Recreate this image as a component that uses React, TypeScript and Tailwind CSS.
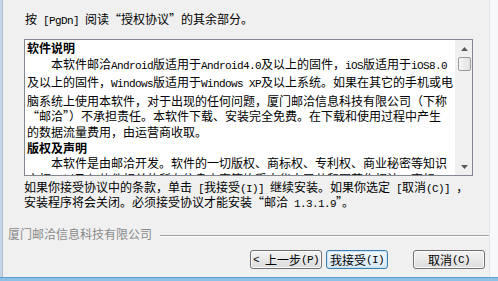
import React from "react";

const mono = "font-['Liberation_Mono'] text-[11px] tracking-[-0.6px]";

// SimSun-like mix: ASCII runs are half-width (6px), CJK runs full-width
function T({ s }: { s: string }) {
  const parts = s.split(/([\x20-\x7e]+)/).filter((p) => p !== "");
  return (
    <>
      {parts.map((p, i) =>
        /^[\x20-\x7e]+$/.test(p) ? (
          <span key={i} className={`${mono} whitespace-pre`}>
            {p}
          </span>
        ) : (
          <span key={i}>{p}</span>
        )
      )}
    </>
  );
}

const lines: { s: string; bold?: boolean; indent?: boolean }[] = [
  { s: "软件说明", bold: true },
  { s: "本软件邮洽Android版适用于Android4.0及以上的固件，iOS版适用于iOS8.0", indent: true },
  { s: "及以上的固件，Windows版适用于Windows XP及以上系统。如果在其它的手机或电" },
  { s: "脑系统上使用本软件，对于出现的任何问题，厦门邮洽信息科技有限公司（下称" },
  { s: "“邮洽”）不承担责任。本软件下载、安装完全免费。在下载和使用过程中产生" },
  { s: "的数据流量费用，由运营商收取。" },
  { s: "版权及声明", bold: true },
  { s: "本软件是由邮洽开发。软件的一切版权、商标权、专利权、商业秘密等知识", indent: true },
  { s: "产权，以及与软件相关的所有信息内容等均受中华人民共和国著作权法、商标" },
];

function Arrow({ down }: { down?: boolean }) {
  return (
    <svg width="7" height="4" viewBox="0 0 7 4">
      {down ? (
        <polygon points="0,0 7,0 3.5,4" fill="#5a5a5a" />
      ) : (
        <polygon points="0,4 7,4 3.5,0" fill="#5a5a5a" />
      )}
    </svg>
  );
}

function Btn({ label, w, def }: { label: string; w: string; def?: boolean }) {
  return (
    <div
      className={`${w} h-[19px] shrink-0 rounded-[3px] border flex items-center justify-center text-[12px] leading-[12px] ${
        def
          ? "border-[#3c7fb1] bg-gradient-to-b from-[#f4f9fd] to-[#d6e8f5] shadow-[inset_0_0_0_1px_#c9e4f7]"
          : "border-[#707070] bg-gradient-to-b from-[#f4f4f4] to-[#dcdcdc] shadow-[inset_0_0_0_1px_#fbfbfb]"
      }`}
    >
      <T s={label} />
    </div>
  );
}

export default function App() {
  return (
    <div className="w-[498px] h-[281px] overflow-hidden bg-[#f0f0f0] grid grid-rows-[277px_4px] font-['Noto_Sans_CJK_SC',sans-serif] text-black">
      <div className="grid grid-cols-[3px_1fr_9px] overflow-hidden">
        <div className="bg-[#c6d6e6] border-r border-[#aebfd0]" />
        <div className="flex flex-col">
          <div className="shrink-0 h-[12px] mt-[13px] pl-[22px] text-[12px] leading-[12px] whitespace-nowrap">
            <T s="按 [PgDn] 阅读“授权协议”的其余部分。" />
          </div>

          <div className="shrink-0 mt-[14px] ml-[21px] w-[449px] h-[137px] border border-[#828790] bg-white flex overflow-hidden">
            <div className="flex-1 overflow-hidden pl-[2px] text-[12px] leading-[15.6px]">
              {lines.map((l, i) => (
                <div
                  key={i}
                  className={`whitespace-nowrap ${l.bold ? "font-bold" : ""} ${l.indent ? "pl-[24px]" : ""}`}
                >
                  <T s={l.s} />
                </div>
              ))}
            </div>
            <div className="w-[17px] bg-[#f0f0f0] flex flex-col">
              <div className="h-[17px] flex items-center justify-center pl-[1px]">
                <Arrow />
              </div>
              <div className="h-[14px] ml-[3px] mr-[1px] rounded-[2px] border border-[#9b9b9b] bg-gradient-to-r from-[#f5f5f5] to-[#e2e2e2]" />
              <div className="flex-1" />
              <div className="h-[17px] flex items-center justify-center pl-[1px]">
                <Arrow down />
              </div>
            </div>
          </div>

          <div className="shrink-0 h-[23px] mt-[5px] pl-[21px] text-[12px] leading-[11.5px] whitespace-nowrap">
            <div>
              <T s="如果你接受协议中的条款，单击 [我接受(I)] 继续安装。如果你选定 [取消(C)] ，" />
            </div>
            <div>
              <T s="安装程序将会关闭。必须接受协议才能安装“邮洽 1.3.1.9”。" />
            </div>
          </div>

          <div className="shrink-0 h-[12px] mt-[24px] pl-[5px] flex items-center gap-2">
            <span className="text-[12px] leading-[12px] text-[#8a8a8a] whitespace-nowrap">
              厦门邮洽信息科技有限公司
            </span>
            <div className="flex-1 mt-[3px] border-t border-[#a0a0a0] border-b border-b-white" />
          </div>

          <div className="shrink-0 mt-[10px] pr-[4px] flex justify-end">
            <Btn label="< 上一步(P)" w="w-[72px]" />
            <div className="w-[4px]" />
            <Btn label="我接受(I)" w="w-[62px]" def />
            <div className="w-[25px]" />
            <Btn label="取消(C)" w="w-[72px]" />
          </div>
        </div>
        <div className="bg-[#f7f8f9] border-l border-[#e2e6ea]" />
      </div>
      <div className="bg-[#8dc2e6] border-t border-[#5d9fcf]" />
    </div>
  );
}
